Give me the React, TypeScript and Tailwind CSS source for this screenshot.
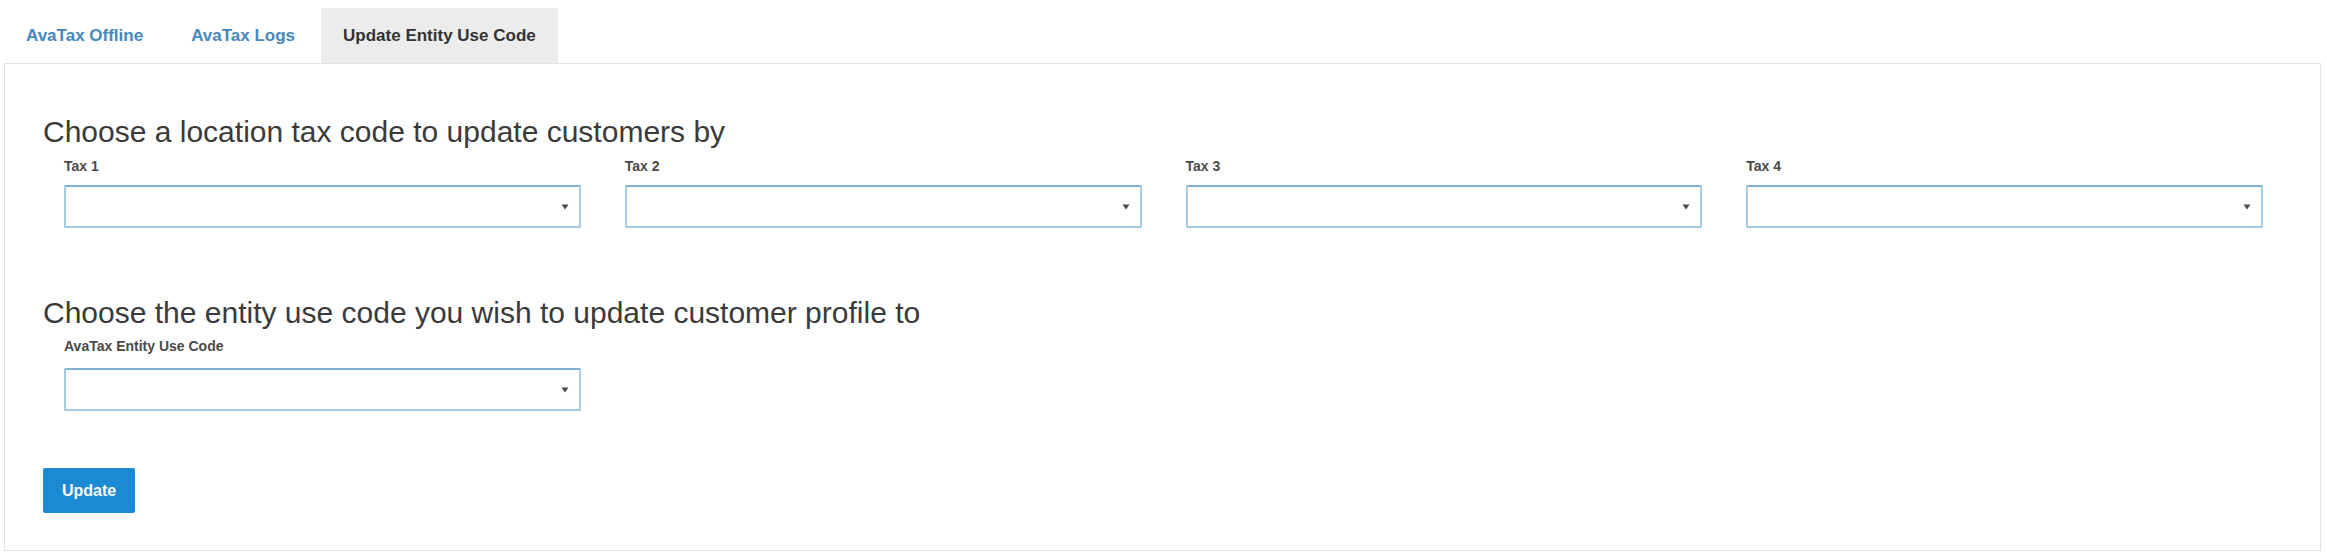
import React from "react";

const tabs = [
	{ label: "AvaTax Offline", active: false },
	{ label: "AvaTax Logs", active: false },
	{ label: "Update Entity Use Code", active: true },
];

const taxFields = ["Tax 1", "Tax 2", "Tax 3", "Tax 4"];

function FakeSelect() {
	return (
		<div className="h-[43px] w-full rounded-[2px] border-2 border-[#a6cbe4] border-t-[#7fb2d6] bg-white flex items-center justify-end pr-[10px]">
			<svg width="8" height="6" viewBox="0 0 8 6" className="text-[#4a4a4a]">
				<path d="M0.5 0.5 L7.5 0.5 L4 5.5 Z" fill="currentColor" />
			</svg>
		</div>
	);
}

function Field({ label }: { label: string }) {
	return (
		<div className="px-[22px]">
			<div className="mt-[9px] text-[14px] leading-[18px] font-bold text-[#4a4a4a]">{label}</div>
			<div className="mt-[10px]">
				<FakeSelect />
			</div>
		</div>
	);
}

export default function App() {
	return (
		<div
			className="w-[2327px] h-[558px] bg-white text-[#333]"
			style={{ fontFamily: '"Liberation Sans", Arial, sans-serif' }}
		>
			{/* tabs */}
			<div className="flex items-end gap-[4px] pl-[4px] pt-[8px]">
				{tabs.map((t) => (
					<div
						key={t.label}
						className={
							t.active
								? "h-[55px] px-[22px] flex items-center bg-[#ececec] text-[17px] font-bold text-[#333]"
								: "h-[55px] px-[22px] flex items-center text-[17px] font-bold text-[#4588bd]"
						}
					>
						{t.label}
					</div>
				))}
			</div>

			{/* panel */}
			<div className="ml-[4px] mr-[6px] border border-[#e2e2e2] bg-white pt-[51px] pl-[38px] pr-[35px] pb-[37px]">
				<h2 className="text-[30px] leading-[33px] font-normal text-[#3a3a3a]">
					Choose a location tax code to update customers by
				</h2>
				<div className="grid grid-cols-4 -ml-px">
					{taxFields.map((f) => (
						<Field key={f} label={f} />
					))}
				</div>

				<h2 className="mt-[68px] text-[30px] leading-[33px] font-normal text-[#3a3a3a]">
					Choose the entity use code you wish to update customer profile to
				</h2>
				<div className="grid grid-cols-4 -ml-px">
					<div className="px-[22px]">
						<div className="mt-[8px] text-[14px] leading-[18px] font-bold text-[#4a4a4a]">
							AvaTax Entity Use Code
						</div>
						<div className="mt-[13px]">
							<FakeSelect />
						</div>
					</div>
				</div>

				<button className="mt-[57px] w-[92px] h-[45px] rounded-[2px] bg-[#1b8ad4] text-white text-[16px] font-bold">
					Update
				</button>
			</div>
		</div>
	);
}
